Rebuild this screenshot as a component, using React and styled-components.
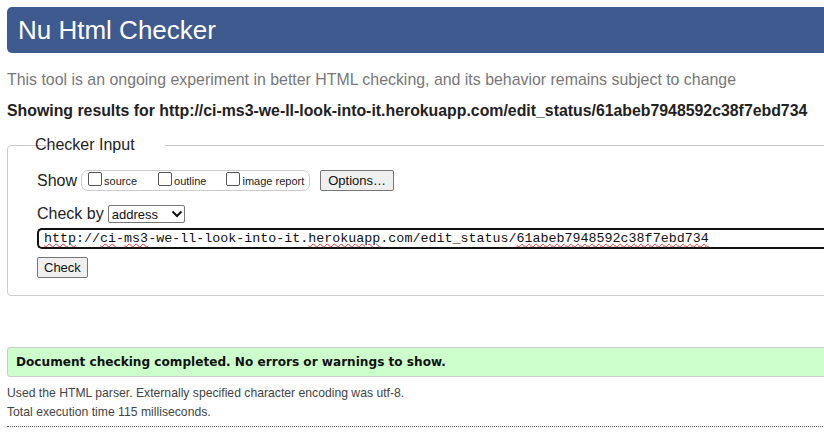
import React from 'react';
import styled, { createGlobalStyle } from 'styled-components';

const GlobalStyle = createGlobalStyle`
  html, body {
    margin: 0;
    padding: 0;
    background: #fff;
    overflow: hidden;
  }
  body {
    font-family: 'Liberation Sans', Arial, sans-serif;
    color: #222;
  }
`;

const Page = styled.div`
  width: 900px;
  padding: 7px 0 0 7px;
`;

const Header = styled.h1`
  margin: 0;
  height: 46px;
  display: flex;
  align-items: center;
  padding-left: 11px;
  background: #3f5a8f;
  color: #fff;
  font-size: 26px;
  font-weight: normal;
  border-radius: 5px 0 0 5px;
`;

const Intro = styled.p`
  margin: 17px 0 0;
  font-size: 15.9px;
  color: #777;
  line-height: 20px;
`;

const Results = styled.p`
  margin: 11px 0 0;
  font-size: 15.85px;
  font-weight: bold;
  color: #222;
  line-height: 20px;
`;

const Fieldset = styled.fieldset`
  margin: 15px 0 0;
  padding: 16px 0 17px 29px;
  border: 1px solid #ccc;
  border-radius: 4px;
  min-width: 0;
`;

const Legend = styled.legend`
  padding: 0 1px;
  margin-left: 26px;
  font-size: 16px;
  color: #222;
  position: relative;
  left: -29px;
`;

const Row = styled.div`
  display: flex;
  align-items: center;
  margin-top: ${(p) => p.$top || 0}px;
  font-size: 16px;
  color: #222;
`;

const Label = styled.span`
  margin-right: 4px;
`;

const CheckGroup = styled.div`
  display: flex;
  align-items: center;
  height: 19px;
  padding: 0 5px 0 6px;
  border: 1px solid #ccc;
  border-radius: 7px;
  margin-right: 10px;
`;

const Option = styled.label`
  display: flex;
  align-items: center;
  font-size: 11px;
  margin-right: ${(p) => p.$gap}px;
  &:last-child {
    margin-right: 0;
  }
`;

const Box = styled.span`
  width: 12px;
  height: 12px;
  border: 1px solid #555;
  border-radius: 2px;
  margin-right: 2px;
  margin-top: -4px;
  background: #fff;
`;

const Button = styled.button`
  font-family: 'Liberation Sans', Arial, sans-serif;
  font-size: 13px;
  color: #111;
  height: 21px;
  padding: 0 ${(p) => p.$pad || 6}px;
  background: #efefef;
  border: 1px solid #767676;
  border-radius: 2px;
`;

const Select = styled.div`
  width: 72px;
  height: 16px;
  margin-left: 4px;
  border: 1px solid #767676;
  border-radius: 2px;
  display: flex;
  align-items: center;
  justify-content: space-between;
  padding: 0 0 0 3px;
  font-size: 13px;
  color: #111;
`;

const Chevron = () => (
  <svg width="14" height="10" viewBox="0 0 14 10">
    <path d="M2.5 2.5 L7 7 L11.5 2.5" fill="none" stroke="#111" strokeWidth="2" />
  </svg>
);

const UrlBox = styled.div`
  margin-top: 5px;
  height: 17px;
  border: 2px solid #111;
  border-right: none;
  border-radius: 5px 0 0 5px;
  display: flex;
  align-items: center;
  padding-left: 5px;
  font-family: 'Liberation Mono', 'Courier New', monospace;
  font-size: 13.35px;
  color: #111;
`;

const Squiggle = styled.span`
  text-decoration: underline wavy #e33;
  text-decoration-thickness: 1px;
  text-underline-offset: 1px;
`;

const Success = styled.div`
  margin-top: 51px;
  height: 28px;
  display: flex;
  align-items: center;
  padding-left: 8px;
  background: #ccffcc;
  border: 1px solid #ccc;
  border-radius: 3px 0 0 3px;
  font-family: 'DejaVu Sans', Verdana, sans-serif;
  font-weight: bold;
  font-size: 12.1px;
  color: #111;
`;

const Details = styled.div`
  margin-top: 7px;
  font-size: 12.2px;
  color: #444;
  line-height: 19px;
  padding-bottom: 4px;
  border-bottom: 1px dotted #666;
`;

export default function App() {
  return (
    <>
      <GlobalStyle />
      <Page>
        <Header>Nu Html Checker</Header>
        <Intro>
          This tool is an ongoing experiment in better HTML checking, and its behavior remains subject to change
        </Intro>
        <Results>
          Showing results for http://ci-ms3-we-ll-look-into-it.herokuapp.com/edit_status/61abeb7948592c38f7ebd734
        </Results>
        <Fieldset>
          <Legend>Checker Input</Legend>
          <Row>
            <Label>Show</Label>
            <CheckGroup>
              <Option $gap={21}><Box />source</Option>
              <Option $gap={20}><Box />outline</Option>
              <Option $gap={0}><Box />image report</Option>
            </CheckGroup>
            <Button $pad={7}>Options…</Button>
          </Row>
          <Row $top={14}>
            <span>Check by</span>
            <Select>
              address
              <Chevron />
            </Select>
          </Row>
          <UrlBox>
            <span>
              <Squiggle>http</Squiggle>://<Squiggle>ci</Squiggle>-<Squiggle>ms3</Squiggle>-we-ll-look-into-it.<Squiggle>herokuapp</Squiggle>.com/edit_status/<Squiggle>61abeb7948592c38f7ebd734</Squiggle>
            </span>
          </UrlBox>
          <Row $top={8}>
            <Button>Check</Button>
          </Row>
        </Fieldset>
        <Success>Document checking completed. No errors or warnings to show.</Success>
        <Details>
          <div>Used the HTML parser. Externally specified character encoding was utf-8.</div>
          <div>Total execution time 115 milliseconds.</div>
        </Details>
      </Page>
    </>
  );
}
